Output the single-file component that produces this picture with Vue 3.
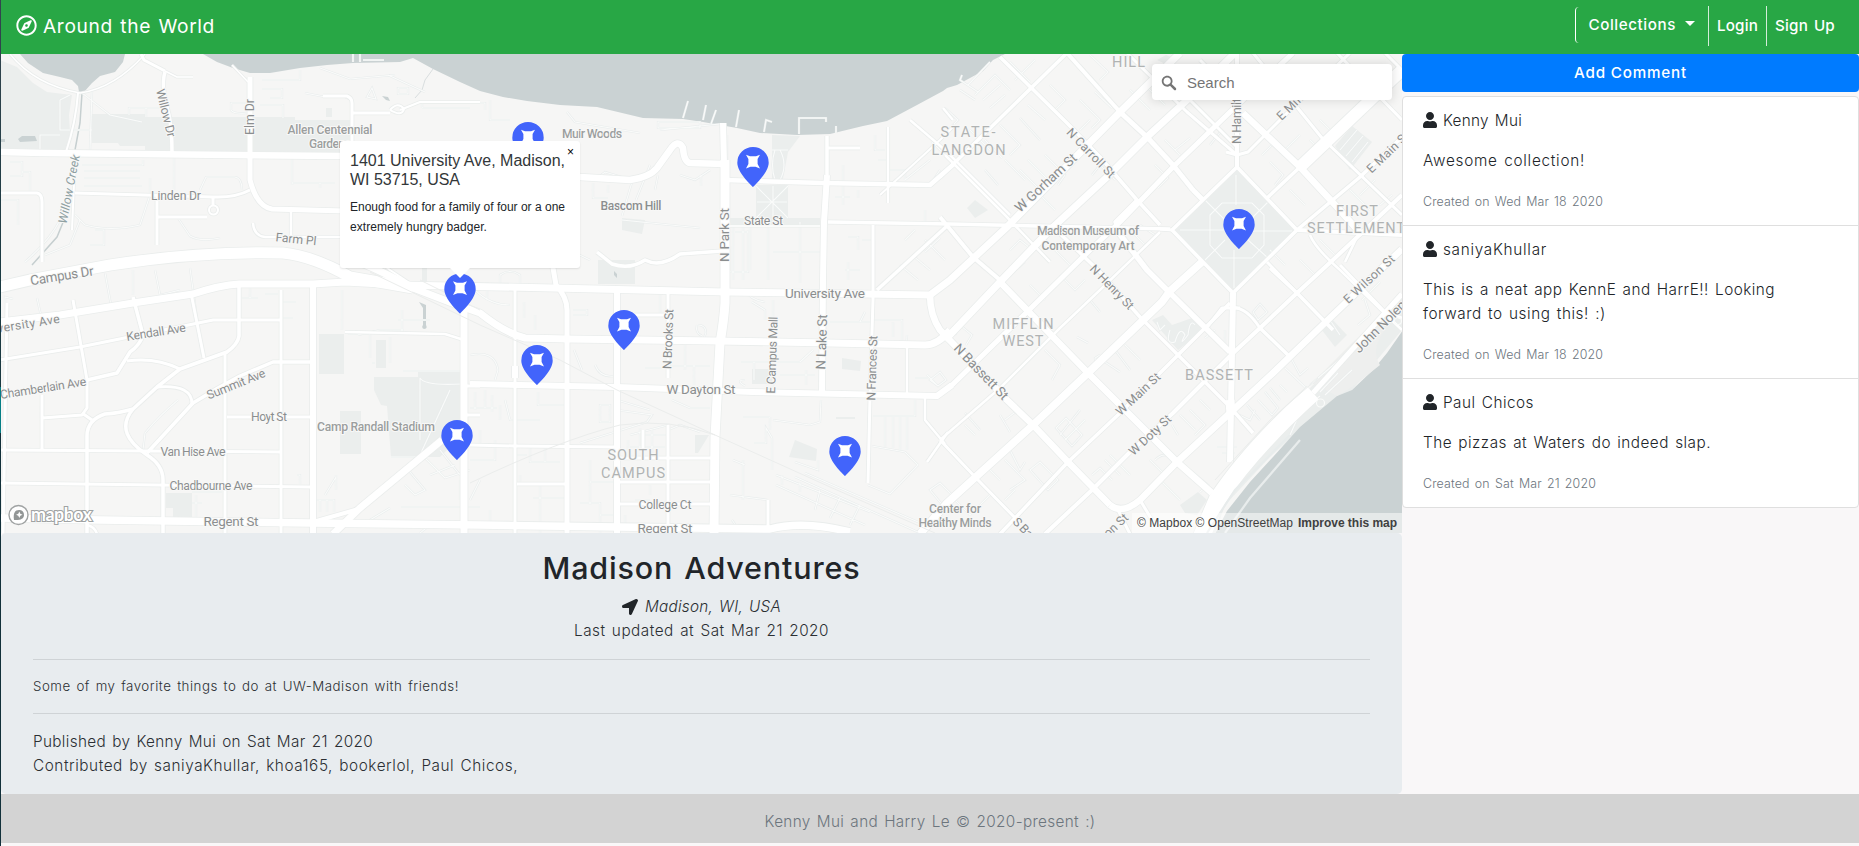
<script setup>
// Spreads an element's letters so that its text takes the given width.
const vFit = {
  mounted(el, { value }) {
    const w = el.getBoundingClientRect().width
    const n = el.textContent.length
    el.style.letterSpacing = ((value - w) / n).toFixed(3) + 'px'
  },
}

const comments = [
  { name: 'Kenny Mui', nw: 79, lines: [['Awesome collection!', 162]], date: 'Created on Wed Mar 18 2020', dw: 180 },
  {
    name: 'saniyaKhullar', nw: 104,
    lines: [['This is a neat app KennE and HarrE!! Looking', 352], ['forward to using this! :)', 183]],
    date: 'Created on Wed Mar 18 2020', dw: 180,
  },
  { name: 'Paul Chicos', nw: 91, lines: [['The pizzas at Waters do indeed slap.', 288]], date: 'Created on Sat Mar 21 2020', dw: 173 },
]

const water = [
  'M20,54 L28,63 43,73 60,77 72,80 78,86 79,92 84,92 92,83 100,76 115,72 123,62 125,54Z',
  'M203,54 L217,62 233,68 250,73 270,73 300,68 327,65 353,63 400,62 413,58 433,69 460,82 480,91 503,97 527,101 560,105 597,107 643,118 683,119 703,122 737,128 760,133 797,135 830,134 863,126 887,121 917,105 943,91 947,88 957,85 983,71 993,60 1005,54Z',
  'M1403,330 L1387,353 1373,370 1352,390 1337,396 1300,427 1273,457 1250,482 1227,511 1215,534 1403,534Z',
]

const parks = [
  'M0,60 L17,67 33,83 47,92 72,95 69,115 70,133 66,150 0,149Z',
  'M92,114 H145 V146 H120 L118,143 H92Z',
  'M145,117 H295 V152 H145Z', 'M295,120 H351 V153 H295Z',
  'M1237,170 L1295,230 1233,290 1175,230Z',
  'M319,334 H344 V374 H319Z', 'M376,340 H386 V368 H376Z',
  'M340,411 H361 V454 H340Z',
  'M374,377 L418,377 418,372 461,372 461,436 440,457 391,457 387,406 381,405 374,390Z',
  'M166,493 H192 V518 H173 V508 H166Z',
  'M598,260 H635 V284 H598Z', 'M622,218 L645,220 642,234 622,230Z',
  'M756,185 H788 V219 H756Z', 'M772,135 L800,136 788,152 782,184 772,180Z', 'M725,218 H820 V225 H725Z',
  'M752,369 H776 V384 H752Z', 'M842,358 L861,361 860,371 842,369Z',
  'M795,440 L817,449 816,461 789,457Z', 'M695,435 H709 L698,453 H695Z', 'M836,417 H855 V419 H836Z',
  'M1152,320 L1163,315 1172,325 1195,317 1202,331 1178,350Z',
  'M1318,325 L1330,317 1347,335 1335,347Z',
  'M1310,388 L1402,297 1402,330 1352,390 1337,396 1270,457 1225,505 1215,534 1205,534 1220,505Z',
  'M1180,505 L1198,492 1207,500 1197,515 1185,513Z',
  'M1335,146 L1352,126 1372,142 1350,170Z', 'M967,208 L975,200 988,210 975,218Z',
  'M326,108 H332 V117 H326Z', 'M1157,60 L1166,55 1178,60 1170,66Z', 'M422,268 h5 v14 h-5Z',
]

// Thin service lanes and footpaths.
const lanes = [
  'M129,115 V108 H160 M146,108 V117 M60,100 L70,95 M60,100 V130 H92 M92,92 L90,150 M82,93 L110,115 142,122 M40,152 V135 H60',
  'M82,165 H143 V160 M84,171 H140 M84,178 H140 M84,186 H142 M150,178 V195 M75,215 L85,225 Q110,232 140,225 L150,195 M174,158 V190',
  'M10,162 H22 V176 H10 M22,172 H30 V193 M1,200 H18 V225 M45,255 L70,245 80,220 M25,262 Q50,240 60,220 M95,230 H104 V245 H90',
  'M200,190 L206,177 H235 Q242,178 242,190 M178,218 L190,236 Q200,242 220,238 M292,158 V185 M292,183 H320 V188 M310,183 H335',
  'M231,110 V103 H248 M231,110 Q233,114 246,113 M305,93 L325,97 H345 L352,100 M388,75 L425,92 M262,80 H300 V70 M262,89 H282 V98 H270 M260,105 H283 V118 M367,97 L372,88 376,99Z M398,88 H408 V94 H398Z',
  'M353,54 V62 M360,54 V62 M363,60 H384 M395,75 L350,79 320,68 M422,103 H480 M422,108 H470 M422,103 V108',
  'M470,103 H485 L485,110 M490,100 V120 H510 M595,180 L605,172 625,178 M593,183 V198 H608 M608,185 V193 M655,190 L658,175 M567,112 L575,122 640,133',
  'M658,122 H700 V128 H658Z M660,130 L720,124 M727,135 V162 M565,248 L590,260 M632,182 L622,216 M622,220 L700,228 M636,200 L650,165 M680,175 L695,180 710,170 M701,175 V186',
  'M683,118 L688,101 M703,120 L706,105 M711,124 L716,110 M736,127 L739,110 M764,132 L766,120 772,122 M799,134 V118 H826 V122 M836,133 V126',
  'M772,150 L788,150 M775,150 Q770,165 775,180 M780,150 Q788,165 780,180 M756,186 L788,218 M788,186 L756,218 M757,202 H787 M773,186 V218',
  'M733,226 V280 M743,226 V280 M750,226 V270 M768,226 V280 M730,246 V272 H748 V230 M800,235 V283 M773,252 H820 M800,222 V252 M820,252 H800 M735,232 H748',
  'M843,165 V205 M835,197 H850 M858,190 V198 M848,237 H858 V250 M862,240 H874 V280 M845,270 H860 M890,170 H905 V180 M875,135 V150 H885 M878,160 H888 M925,210 V222 M915,230 L905,240 M848,262 V280',
  'M940,238 L925,252 M925,240 L945,260 M912,255 L930,270 M900,265 L918,280 M932,142 L945,155 M940,170 L930,185 M930,160 L905,180 M960,90 L975,100 M945,108 L958,120 948,130',
  'M5,303 V297 L13,299 M37,298 L42,320 M105,273 L111,305 M155,270 L160,295 180,290 M133,270 V295 M190,268 L202,355 M242,298 H258 M250,285 V298 M265,294 H278 M281,302 H296 M281,318 H293',
  'M342,290 V330 M348,334 H370 V358 M390,337 V363 M402,310 V333 M398,320 H430 M358,335 L380,330 H404 M372,363 H375 M403,371 H461 M420,378 Q425,386 461,384 M450,390 L420,455 M420,440 V378',
  'M391,457 H425 M336,475 V490 M297,475 H300 V484 M316,500 H334 V512 M320,500 V512 M327,500 V512 M440,450 L460,475 M425,458 L445,478 470,470 M410,472 L425,490 415,495 405,485 M395,480 L385,490 M430,475 L455,465 M336,477 L325,495',
  'M401,507 H480 M370,520 L390,508 M420,533 L430,525 M460,480 V500 M192,492 H222 M196,495 V518 M192,503 H202 M145,433 Q160,415 178,400 M143,450 L145,433',
  'M475,290 Q490,305 510,305 M487,282 V300 M500,284 V275 Q510,268 520,275 V286 M524,302 V318 M535,330 V315 M573,310 H587 V315 H573 M470,355 Q495,350 498,370 L495,380 M515,342 V370',
  'M470,408 H497 M500,405 V420 M475,392 V410 M485,390 V408 M492,395 V412 M505,400 L510,420 H540 M538,392 V405 H570 M480,430 V445 M470,460 H495 V440 M530,445 V462 H560 M545,448 V462 M515,455 H527',
  'M600,405 H610 V422 H600Z M617,410 L652,415 647,422 580,443 M617,400 L650,410 M630,435 L668,425 M628,440 V460 M640,428 V448 M645,435 H668 M630,447 H665 M652,430 V458 M668,430 L680,425 700,432',
  'M590,460 V505 M590,482 H615 M580,503 H600 V533 M533,498 H567 M540,485 V533 M490,510 V530 M480,480 L470,500 M600,515 H615 M650,485 V495 M520,475 V482 M625,515 V530 H640 M635,500 H650',
  'M574,350 L582,370 M595,365 Q600,378 615,376 M645,368 H668 M685,345 V370 M668,366 H710 M694,365 V385 M672,400 L690,408 H710 M660,292 V315 M640,316 H665 M698,325 Q706,325 706,333 Q704,336 704,345 M697,325 Q695,333 702,336',
  'M745,290 Q750,300 765,302 M752,302 L765,310 V320 M741,362 H800 M754,362 V380 M745,380 Q735,380 745,386 M800,362 L813,350 M743,417 H770 M770,417 V430 M754,443 H766 V428 L772,438 V470 M821,400 L820,422 810,425 773,420',
  'M830,322 H872 M873,320 H902 V345 M860,322 L865,312 M893,322 V337 M773,300 V392 M780,375 H815 M806,370 V385 M873,416 H915 V400 M885,417 V447 M893,417 V448 M900,417 V450 M907,417 V450 M872,446 L905,452 918,465 M868,485 L890,494 918,465',
  'M776,475 L870,512 M776,485 L865,525 M795,477 L920,533 M805,473 L925,525 M782,475 V485 M800,482 V492 M820,490 L815,510 M840,498 L830,518 M860,505 L850,525 M795,462 L818,470 V460 M743,460 V500 M732,520 Q740,530 732,533 M733,460 L745,465 M730,495 L768,500',
  'M907,335 Q905,380 908,395 M927,375 L937,385 M930,380 L940,372 946,380 938,386Z M915,378 H928 M930,490 L940,483 955,498 945,508Z M955,500 L970,515 M965,413 L980,430 M965,425 L975,435 M1005,420 L1018,410 M1000,415 L1010,432',
  'M955,335 L960,325 972,335 966,345 M965,322 L955,332 M1010,450 L1020,470 1025,462 M1005,460 L1025,480 1010,490 M1030,470 L1040,462 1058,480 1048,490Z M1005,500 L1015,490 M970,515 L990,495 M1000,480 L990,470',
  'M1060,435 L1080,410 M1065,440 L1085,420 M1056,428 L1072,446 1082,435 1066,418Z M1045,350 L1060,365 1052,380 M1077,337 L1088,343 M1100,355 L1095,358 Q1095,365 1105,362 L1120,372 M1115,350 L1130,370 M1125,345 L1140,360',
  'M1150,460 L1165,475 M1155,460 Q1165,450 1175,460 M1105,460 L1120,475 M1110,455 L1130,475 M1092,475 L1100,468 1112,480 M1160,480 L1180,500 M1190,470 L1208,485 1200,492 M1172,425 L1178,435 M1180,415 L1195,430 M1190,410 L1205,425 1195,435 M1200,400 L1210,410 M1217,447 H1237 M1222,453 H1235',
  'M1235,413 L1250,420 1255,410 M1247,405 L1260,420 M1258,400 L1272,415 1278,408 1265,392 M1270,388 L1280,400 M1280,385 L1287,392 M1292,360 L1300,375 1308,368 M1285,368 L1310,392 M1253,312 L1260,304 1267,312 1258,320Z M1205,338 L1215,330 M1225,330 V345',
  'M1290,435 L1302,408 1312,402 1320,396 M1310,385 L1345,355 M1315,390 L1347,358 M1320,392 L1338,373 M1325,395 L1352,370 M1365,300 L1370,315 1358,325 M1350,350 L1385,310 M1330,320 L1340,335 M1362,300 L1380,282',
  'M1157,322 L1160,330 1165,325 M1170,330 Q1165,345 1175,342 Q1180,325 1185,335 Q1178,348 1188,335 Q1190,318 1195,325',
  'M978,92 L960,80 962,75 M975,95 L995,75 1010,90 M983,100 L1000,85 M968,85 L990,62 M990,108 L1005,95 M1010,62 L1030,82 M1035,60 L1015,80 M1050,85 L1065,100 1055,110 M1028,105 L1045,120 M1080,65 L1098,85 M1090,55 L1108,72 1100,80',
  'M1000,125 L1020,145 1010,155 M1020,118 L1040,140 M1005,160 L1025,180 M985,140 L1002,158 M970,130 L990,150 M1028,160 L1050,182 M1020,170 L1040,190 1030,200 M1045,155 L1065,175 1058,185 M960,165 L975,180 M985,170 L998,185 M1035,190 L1055,210',
  'M1080,100 L1100,120 1092,128 M1095,92 L1112,108 M1080,130 L1090,120 M1092,175 L1100,165 1115,180 M1130,90 L1150,110 M1145,85 L1165,105 M1165,140 L1180,155 M1175,150 L1190,138 M1155,165 L1168,178 1158,188 M1195,120 L1210,135 M1210,145 L1222,130',
  'M1205,200 L1225,220 M1270,200 L1250,220 M1205,260 L1225,240 M1268,258 L1248,240 M1210,215 L1222,203 H1252 L1264,215 V245 L1252,258 H1222 L1210,245Z M1180,230 H1225 M1250,231 H1292 M1236,175 V205 M1234,250 V288',
  'M1262,155 L1275,142 1290,158 M1270,162 L1283,175 1275,185 M1285,150 L1300,135 M1310,140 L1322,152 1312,162 M1320,120 L1335,135 M1290,190 L1305,205 M1315,180 L1330,195 M1350,190 L1370,210 M1340,150 L1357,130 M1346,156 L1363,136 M1352,162 L1368,142 M1360,195 L1375,180 M1380,205 L1392,195',
  'M1075,245 L1090,260 M1055,250 L1070,265 M1010,250 L1020,240 1030,248 M1010,275 L1025,262 M1060,275 L1075,290 1085,280 M1090,300 L1100,312 M1030,285 L1045,300 M1135,235 L1145,245 M1155,235 L1140,225 M1270,250 L1285,265 M1300,260 L1315,275 M1320,240 L1335,255',
]

// [path, width]
const roads = [
  ['M10,54 Q35,85 80,93 Q115,88 145,54', 1.5], ['M141,54 L144,60 165,71', 3], ['M165,71 L177,77 193,77', 1.5], ['M232,65 L248,82', 1.5],
  ['M165,72 C161,85 165,100 169,115 Q172,130 172,153', 3.5], ['M250,77 V155', 5],
  ['M0,193 H37 Q42,194 42,202 V262', 3], ['M75,193 L213,197 Q235,198 250,190', 3],
  ['M157,195 V245', 3], ['M157,217 H207 M213,197 V205', 3], ['M209,210 a4.5,4.5 0 1,0 9,0 a4.5,4.5 0 1,0 -9,0', 2],
  ['M291,212 V236 M253,223 Q254,236 265,237 H340', 2.5], ['M323,96 H347 Q352,98 352,103 V152', 3], ['M352,113 H390', 3], ['M390,110 q8,-9 14,-1 q-2,8 -14,1 M400,110 L420,102 H480', 2],
  ['M78,93 C76,120 70,140 66,152 M75,160 L72,230', 2],
  ['M250,158 V180 Q257,207 272,209 L345,211', 5], ['M345,235 L390,270 420,290', 2],
  ['M7,303 L3,534', 3], ['M73,300 L87,380 V408 L82,415 42,418 M42,395 V450', 3], ['M82,413 L92,420', 3],
  ['M0,360 L80,347 213,320 H281', 3], ['M133,297 L143,335 Q140,345 130,352 L117,373 87,380', 3.5], ['M127,361 Q155,357 180,369', 3],
  ['M239,287 V336 Q238,344 227,352 L180,369 157,387 133,409 Q120,413 105,414 Q87,420 87,436 V534', 3.5],
  ['M133,409 C118,427 128,442 147,455 Q163,465 163,480 V534', 3.5], ['M157,387 Q193,384 192,405', 3], ['M147,453 L193,403 218,388 240,376 273,362 H310', 3.5],
  ['M191,293 L204,358', 3], ['M225,353 V534', 3], ['M281,290 V534', 3], ['M0,450 L281,452', 3], ['M0,483 L310,487', 3], ['M227,417 H310', 3],
  ['M313,284 V534', 6], ['M464,300 V534', 7], ['M345,332 L445,334 464,340', 2.5], ['M461,386 H480 M461,415 H480', 3],
  ['M442,440 L360,508 333,534', 7], ['M313,522 L362,508', 4], ['M87,525 Q95,527 97,534', 2.5],
  ['M515,290 V534', 3], ['M552,262 L556,285 Q567,297 567,310 V534', 5], ['M617,290 V534', 6], ['M668,290 V378 M668,425 V534', 3], ['M643,430 V450', 3],
  ['M625,315 H664', 3], ['M470,445 L515,446 617,447', 3], ['M617,458 H713 M517,484 H567 M617,482 H713 M617,504 H713', 3],
  ['M515,366 V378', 6],
  ['M597,252 L612,264 Q630,270 645,260 Q660,268 680,254 L723,251', 3.5],
  ['M723,123 L725,205 V270', 6], ['M725,160 V303 Q724,320 720,343 L715,437 714,534', 9],
  ['M827,136 V175', 3.5], ['M827,175 L824,222 823,280 822,393', 6], ['M828,148 H860', 3],
  ['M873,225 L873,300 870,397 868,483', 3], ['M888,127 V203', 2.5], ['M907,345 V395', 2.5],
  ['M768,500 V529', 3], ['M925,396 V420 L945,444 M948,432 L927,462', 2.5],
  ['M828,222 L950,224 1170,229', 3.5], ['M725,180 L823,183 930,185 955,163', 4.5], ['M947,226 L877,290', 3.5],
  ['M725,226 H820', 1.5],
  ['M940,217 L973,257 1000,280', 4], ['M943,108 L953,120 M910,120 L945,150 1010,215', 2.5],
  ['M940,177 L1067,53', 3.5], ['M880,195 L940,140 955,125', 2], ['M945,155 L1005,215 1050,262', 2.5],
  ['M1000,57 L1067,123 1100,157 1137,200 1160,225', 3.5], ['M1067,53 L1120,112 1147,137', 4],
  ['M1127,53 L1187,112 1237,155', 3], ['M1200,60 L1240,100', 3],
  ['M1120,112 L1147,137 1173,165 1193,190 M1193,190 L1203,200', 5],
  ['M1053,227 L1100,272 1140,317 1178,355 1230,407 1253,433', 3.5],
  ['M1115,228 L1147,270 1170,293 1230,352', 5.5], ['M1137,200 L1115,222 1120,232', 3.5],
  ['M950,387 L1027,312 1090,250 1120,222 1173,167 1230,112 1293,53', 5],
  ['M1000,388 L1060,328 1100,290 1160,232', 2.5], ['M940,440 L1000,388', 2.5],
  ['M940,440 L978,480 1020,523', 3], ['M1000,534 L1068,462 1120,413 1178,355 1230,303', 3.5],
  ['M1045,534 L1092,490 1130,452 1173,413 1230,356 1260,328 1297,293 1335,258 1402,195', 4],
  ['M1270,268 L1297,293 1333,330 M1260,328 L1290,357', 3.5], ['M1230,308 Q1245,305 1260,328', 3], ['M1205,330 L1222,308 H1240', 3],
  ['M1172,230 L1237,167 1297,230 1233,293Z', 3.5], ['M1172,230 L1160,229', 3],
  ['M1237,53 V167', 4], ['M1226,152 L1237,155 1248,152 1283,117 1350,53', 3],
  ['M1233,293 L1232,352 1230,462', 6], ['M1230,400 L1231,415', 9],
  ['M1267,198 L1300,167', 3.5], ['M1267,262 L1297,293', 3],
  ['M1297,230 L1360,177 1402,137', 3.5], ['M1297,230 L1402,235', 4], ['M1310,235 Q1315,248 1340,270 L1402,330 M1357,237 L1345,262', 2.5],
  ['M1190,100 L1237,147', 3], ['M1253,53 L1322,138 1402,215', 3], ['M1337,53 L1402,120', 3], ['M1385,53 L1402,70', 3],
  ['M1243,113 L1300,167 1337,207 1362,235', 6.5],
  ['M1340,265 L1385,312 1402,318', 3],
  ['M1140,500 L1155,525', 3], ['M1118,510 L1130,534', 3],
  ['M1313,393 L1402,294', 5],
  ['M0,152 L43,153 340,156 H480 L580,177 630,180 Q650,177 657,168 L670,150 Q678,138 683,148 Q684,162 690,163 L725,164', 6.5],
  ['M0,287 L30,280 110,265 Q200,251 283,253 Q313,256 350,277 L413,288', 11],
  ['M345,258 Q365,262 413,288 L460,306 480,313 Q505,333 525,338 L567,339 717,341 830,343 925,345 Q938,345 950,330', 7],
  ['M0,322 L60,315 133,303 193,294 Q220,285 239,284 H313 L345,282 400,285 553,288 725,292 930,295 950,280 1007,227 1120,112 1180,53', 7],
  ['M930,295 Q930,315 940,330 L1007,400 1033,425 1068,462 1110,505', 6.5],
  ['M945,340 L1000,282 1050,230 1107,177 1147,137 1187,100 1235,53', 7],
  ['M470,384 L617,387 753,392 937,396 952,385', 6],
  ['M1000,282 L1027,310 1088,373 1177,462 1212,493', 6.5],
  ['M920,534 L947,503 1033,425 1088,373 1162,302 1170,291 1202,262', 7.5],
  ['M1110,505 Q1122,515 1140,500 L1177,462 1230,413 1273,373 1333,315 1402,249', 6.5],
  ['M1300,167 L1402,70', 12],
  ['M0,518 L100,520 310,523 480,525 770,529 Q803,520 850,532', 7.5],
  ['M1313,393 Q1250,450 1217,500 L1200,540', 17],
]

const hood = { s: 14.5, c: '#b0b3b3', ls: 1 }
const labels = [
  { t: 'Willow Dr', x: 166, y: 113, r: 76, w: 49 }, { t: 'Elm Dr', x: 250, y: 117, r: -90, w: 36 },
  { t: 'Willow Creek', x: 69, y: 189, r: -79, w: 70, c: '#8fa0a2', i: 1 },
  { t: 'Allen Centennial', x: 330, y: 129.500, w: 85, m: 1 }, { t: 'Gardens', x: 330, y: 144, w: 42, m: 1 },
  { t: 'Linden Dr', x: 176, y: 195.5, w: 50 }, { t: 'Farm Pl', x: 296, y: 239, r: 6, w: 41 },
  { t: 'Campus Dr', x: 62, y: 276, r: -9, w: 64, s: 13.5 }, { t: 'University Ave', x: 19, y: 325, r: -9, w: 82 },
  { t: 'Kendall Ave', x: 156, y: 332, r: -9, w: 60 }, { t: 'Chamberlain Ave', x: 43, y: 388, r: -9, w: 87 },
  { t: 'Summit Ave', x: 236, y: 384, r: -22, w: 62 }, { t: 'Hoyt St', x: 269, y: 417, w: 36 },
  { t: 'Van Hise Ave', x: 193, y: 451.5, w: 65 }, { t: 'Chadbourne Ave', x: 211, y: 486, w: 83 },
  { t: 'Regent St', x: 231, y: 522, w: 55, s: 13.5 }, { t: 'Camp Randall Stadium', x: 376, y: 427, w: 118, m: 1 },
  { t: 'Muir Woods', x: 592, y: 133.5, w: 60, m: 1 }, { t: 'Bascom Hill', x: 631, y: 206, w: 61, m: 1, c: '#8b8e8f' },
  { t: 'State St', x: 763.5, y: 220.5, w: 39 }, { t: 'N Park St', x: 725, y: 235, r: -90, w: 54, s: 13.5 },
  { t: 'University Ave', x: 825, y: 294, w: 80, s: 13.5 }, { t: 'N Brooks St', x: 668, y: 339, r: -88, w: 60 },
  { t: 'W Dayton St', x: 701, y: 390, w: 69, s: 13.5 }, { t: 'E Campus Mall', x: 772, y: 355, r: -88, w: 77 },
  { t: 'N Lake St', x: 822, y: 342, r: -88, w: 55, s: 13.5 }, { t: 'N Frances St', x: 872, y: 368, r: -88, w: 65 },
  { t: 'SOUTH', x: 633, y: 456, w: 51, ...hood }, { t: 'CAMPUS', x: 633, y: 474, w: 64, ...hood },
  { t: 'College Ct', x: 665, y: 504.5, w: 53 }, { t: 'Regent St', x: 665, y: 529, w: 55, s: 13.5 },
  { t: 'HILL', x: 1128.500, y: 63, w: 33, ...hood }, { t: 'STATE-', x: 968, y: 133, w: 55, ...hood }, { t: 'LANGDON', x: 968.5, y: 150.5, w: 74, ...hood },
  { t: 'N Carroll St', x: 1091, y: 153, r: 46, w: 64 }, { t: 'W Gorham St', x: 1046, y: 183, r: -43, w: 79, s: 13.5 },
  { t: 'Madison Museum of', x: 1088, y: 231, w: 102, m: 1 }, { t: 'Contemporary Art', x: 1088, y: 245.5, w: 93, m: 1 },
  { t: 'N Henry St', x: 1112, y: 287, r: 46, w: 57 }, { t: 'N Hamilton St', x: 1237, y: 108, r: -90, w: 72 },
  { t: 'E Mifflin St', x: 1300, y: 97, r: -44, w: 60 }, { t: 'E Main St', x: 1388, y: 152, r: -44, w: 54 },
  { t: 'FIRST', x: 1357, y: 211.500, w: 42, ...hood }, { t: 'SETTLEMENT', x: 1356, y: 229, w: 98, ...hood },
  { t: 'E Wilson St', x: 1369, y: 279, r: -43, w: 65 }, { t: 'John Nolen Dr', x: 1386, y: 321, r: -45, w: 84, s: 13.5 },
  { t: 'MIFFLIN', x: 1023, y: 324.500, w: 61, ...hood }, { t: 'WEST', x: 1023, y: 342, w: 41, ...hood },
  { t: 'BASSETT', x: 1219, y: 375.5, w: 68, ...hood }, { t: 'N Bassett St', x: 981, y: 372, r: 46, w: 72, s: 13.5 },
  { t: 'W Main St', x: 1138, y: 394, r: -43, w: 56 }, { t: 'W Doty St', x: 1150, y: 435, r: -43, w: 53 },
  { t: 'Center for', x: 955, y: 508.500, w: 52, m: 1 }, { t: 'Healthy Minds', x: 955, y: 523, w: 73, m: 1 },
  { t: 'S Bassett St', x: 1036, y: 541, r: 46, w: 60 }, { t: 'W Wilson St', x: 1102, y: 538, r: -43, w: 66 },
]

const pins = [[528, 162], [753, 187], [1239, 249], [460, 313.5], [624, 350], [537, 385], [457, 460], [845, 476]]
</script>

<template>
  <div class="page">
    <nav class="nav">
      <a class="brand">
        <svg viewBox="0 0 496 512" class="compass"><path fill="#fff" d="M347.94 129.86L203.6 195.83a31.94 31.94 0 0 0-15.77 15.77l-65.97 144.34c-7.61 16.65 9.54 33.81 26.2 26.2l144.34-65.97a31.94 31.94 0 0 0 15.77-15.77l65.97-144.34c7.61-16.66-9.54-33.81-26.2-26.2zm-77.36 148.72c-12.47 12.47-32.69 12.47-45.16 0-12.47-12.47-12.47-32.69 0-45.16 12.47-12.47 32.69-12.47 45.16 0 12.47 12.47 12.47 32.69 0 45.16zM248 8C111.03 8 0 119.03 0 256s111.03 248 248 248 248-111.03 248-248S384.97 8 248 8zm0 448c-110.28 0-200-89.72-200-200S137.72 56 248 56s200 89.72 200 200-89.72 200-200 200z" /></svg>
        <span v-fit="172">Around the World</span>
      </a>
      <div class="links">
        <a class="drop"><span v-fit="87.5">Collections</span><i class="caret"></i></a>
        <a class="link login"><span v-fit="41">Login</span></a>
        <a class="link signup"><span v-fit="60">Sign Up</span></a>
      </div>
    </nav>

    <div class="body">
      <main class="main">
        <section class="map">
          <svg class="canvas" viewBox="1 54 1401 479" width="1401" height="479">
            <rect x="0" y="53" width="1404" height="482" fill="#f6f6f5" />
            <path v-for="(d, i) in parks" :key="'p' + i" :d="d" fill="#ebeeed" />
            <path v-for="(d, i) in water" :key="'w' + i" :d="d" fill="#cad2d3" />
            <path d="M18,139 L22,136 35,136 37,141 20,142Z M1,139 h4 v3 h-4Z M419,302 l7,3 v20 q2,4 -2,4 q-3,-1 -1,-4 v-17Z M382,96 l6,1 2,4 -4,-1Z M614,271 l3,3 v4 l-3,-3Z" fill="#cad2d3" />
            <path d="M1312,383 L1350,345 1375,322 1385,330 Q1370,350 1380,365 L1355,385 1337,396Z" fill="#eeefee" />
            <path d="M82,93 L80,123 75,150 M64,220 L57,237 32,265" class="creek" />
            <path d="M433,69 L425,80 422,90 415,98" stroke="#d9dedf" fill="none" />
            <path v-for="(d, i) in lanes" :key="'lc' + i" :d="d" class="lane-edge" />
            <path v-for="(d, i) in lanes" :key="'l' + i" :d="d" class="lane" />
            <path v-for="([d, w], i) in roads" :key="'rc' + i" :d="d" class="road" stroke="#eaedec" :stroke-width="w + 1.6" />
            <path v-for="([d, w], i) in roads" :key="'r' + i" :d="d" class="road" stroke="#fff" :stroke-width="w" />
            <path d="M370,272 L480,325 560,360 617,390 715,435 830,487 935,533 M420,280 L480,310 M1215,480 L1270,420 1318,378 M470,483 Q560,440 620,425 Q670,418 715,435" class="rail" />
            <path d="M1225,533 L1250,498 1300,440 M1207,533 L1235,490 1290,435" class="lane-edge" />
            <circle cx="1320.500" cy="403" r="4" class="lane" /><circle cx="1398" cy="321" r="3.500" class="lane" />
            <g v-for="(l, i) in labels" :key="'t' + i" :transform="`translate(${l.x} ${l.y}) rotate(${l.r || 0})`">
              <text y="4.300" text-anchor="middle" :font-size="l.s || 12.3" :fill="l.c || (l.m ? '#9b9e9e' : '#8b8e8f')" :font-weight="l.m ? 500 : 400" :font-style="l.i ? 'italic' : 'normal'" :textLength="l.w" class="label">{{ l.t }}</text>
            </g>
            <g v-for="([x, y], i) in pins" :key="'m' + i" :transform="`translate(${x} ${y})`">
              <path d="M0,0 C-3,-3 -15.700,-15 -15.700,-24.300 A15.700,15.700 0 0 1 15.700,-24.300 C15.700,-15 3,-3 0,0Z" fill="#4264fb" />
              <path d="M-7,-32.200 L-3,-30.800 H3 L7,-32.200 L4.600,-28 V-23 L7,-18.600 L2.500,-20.300 H-2.500 L-7,-18.600 L-4.600,-23 V-28Z" fill="#fff" />
            </g>
            <g>
              <circle cx="18.500" cy="515" r="9.500" fill="#fff" fill-opacity=".9" stroke="#a0a3a3" stroke-width="1.400" />
              <path d="M14,520 C13,513 15,510 19,510 A4.700,4.700 0 0 1 24,515 C24,519 20,520.500 14,520Z" fill="#929696" />
              <path d="M19.300,511.500 l1,2.200 2.200,1 -2.200,1 -1,2.200 -1,-2.200 -2.200,-1 2.200,-1Z" fill="#fff" />
              <text x="31" y="520.500" class="logo" textLength="61">mapbox</text>
            </g>
          </svg>

          <div class="popup">
            <span class="close">×</span>
            <h3><span v-fit="215">1401 University Ave, Madison,</span><br /><span v-fit="110">WI 53715, USA</span></h3>
            <p><span v-fit="215">Enough food for a family of four or a one</span><br /><span v-fit="137">extremely hungry badger.</span></p>
          </div>

          <div class="search">
            <svg viewBox="0 0 18 18" width="20" height="20"><path fill="#757575" d="M7.400 2.500c-2.700 0-4.900 2.200-4.900 4.900s2.200 4.900 4.900 4.900c1 0 1.800-.2 2.500-.8l3.700 3.700c.2.200.4.300.8.300.7 0 1.100-.4 1.100-1.100 0-.3-.1-.5-.3-.8L11.400 10c.4-.8.8-1.600.8-2.500.1-2.800-2.100-5-4.800-5zm0 1.600c1.800 0 3.200 1.400 3.200 3.200s-1.400 3.200-3.200 3.200-3.300-1.300-3.300-3.100 1.400-3.300 3.300-3.300z" /></svg>
            <span>Search</span>
          </div>
          <div class="attrib"><span v-fit="156">© Mapbox © OpenStreetMap</span><b v-fit="99">Improve this map</b></div>
        </section>

        <section class="info">
          <h1><span v-fit="318">Madison Adventures</span></h1>
          <div class="place">
            <svg viewBox="0 0 512 512" width="16" height="16"><path fill="#212529" d="M444.520 3.520L28.740 195.420c-47.970 22.390-31.980 92.750 19.190 92.750h175.910v175.910c0 51.170 70.360 67.170 92.750 19.190l191.900-415.780c15.990-38.390-25.590-79.970-63.970-63.970z" /></svg>
            <em v-fit="136">Madison, WI, USA</em>
          </div>
          <div class="updated"><span v-fit="255">Last updated at Sat Mar 21 2020</span></div>
          <hr />
          <p class="desc"><span v-fit="426">Some of my favorite things to do at UW-Madison with friends!</span></p>
          <hr />
          <div><span v-fit="340">Published by Kenny Mui on Sat Mar 21 2020</span></div>
          <div><span v-fit="485">Contributed by saniyaKhullar, khoa165, bookerlol, Paul Chicos,</span></div>
        </section>
      </main>

      <aside class="side">
        <button class="add"><span v-fit="113">Add Comment</span></button>
        <ul class="list">
          <li v-for="(c, i) in comments" :key="i">
            <div class="who">
              <svg viewBox="0 0 448 512" width="14" height="16"><path fill="#212529" d="M224 256c70.700 0 128-57.300 128-128S294.700 0 224 0 96 57.300 96 128s57.300 128 128 128zm89.600 32h-16.700c-22.200 10.200-46.900 16-72.900 16s-50.600-5.800-72.900-16h-16.700C60.200 288 0 348.200 0 422.400V464c0 26.500 21.500 48 48 48h352c26.500 0 48-21.500 48-48v-41.600c0-74.200-60.200-134.400-134.400-134.400z" /></svg>
              <span v-fit="c.nw">{{ c.name }}</span>
            </div>
            <p><template v-for="(l, j) in c.lines" :key="j"><br v-if="j" /><span v-fit="l[1]">{{ l[0] }}</span></template></p>
            <small><span v-fit="c.dw">{{ c.date }}</span></small>
          </li>
        </ul>
      </aside>
    </div>

    <footer class="footer"><span v-fit="331">Kenny Mui and Harry Le © 2020-present :)</span></footer>
  </div>
</template>

<style>
body { background: #f9f7f8; }
</style>

<style scoped>
* { box-sizing: border-box; }
.page {
  height: 846px; overflow: hidden; padding-left: 1px; color: #212529;
  font: 350 15.300px/24px Inter, "Liberation Sans", sans-serif; word-spacing: 1.500px;
  background: linear-gradient(#33454f 0, #1b3a42 280px, #1b3a42 387px, #067f86 387px, #067f86 433px, #12303a 433px) 0 0 / 1px 100% no-repeat;
}
span, em, b { white-space: nowrap; display: inline-block; }
.nav { height: 54px; background: #28a745; color: #fff; display: flex; justify-content: space-between; padding-left: 15px; }
.brand { display: flex; align-items: center; gap: 6px; font-size: 19.200px; padding-bottom: 3px; font-weight: 400; }
.compass { width: 21px; height: 21px; }
.links { display: flex; align-items: flex-start; font-weight: 500; font-size: 15.200px; }
.drop { display: flex; margin-top: 7px; width: 133px; height: 36px; padding: 6px 0 0 12.500px; border-left: 1px solid #fff; border-radius: 4px 0 0 4px; }
.caret { margin: 8px 0 0 9px; width: 0; height: 0; border: 5px solid transparent; border-top-color: #fff; border-bottom: 0; }
.link { margin-top: 6px; height: 40px; padding: 8px 0 0 8px; border-left: 1px solid #d4edda; }
.login { width: 58px; }
.signup { width: 93px; }
.body { display: flex; height: 740px; }
.main { width: 1401px; }
.map { position: relative; height: 479px; overflow: hidden; background: #f6f6f5; }
.canvas { display: block; }
.creek { fill: none; stroke: #c6cfd0; stroke-width: 1.500; }
.lane-edge { fill: none; stroke: #e8ecec; stroke-width: 2.200; }
.lane { fill: none; stroke: #fafbfa; stroke-width: 1.100; }
.road { fill: none; stroke-linejoin: round; }
.rail { fill: none; stroke: #ebedec; stroke-width: 1; }
.label { font-family: Roboto, sans-serif; word-spacing: 0; paint-order: stroke; stroke: #f8f8f7; stroke-width: 2px; stroke-linejoin: round; }
.logo { font: 700 18px Lato, sans-serif; fill: #fff; stroke: #a0a3a3; stroke-width: 2.200px; paint-order: stroke; }
.popup {
  position: absolute; left: 339px; top: 87px; width: 240px; height: 127px; padding: 8px 10px; background: #fff; border-radius: 3px;
  box-shadow: 0 1px 2px rgba(0, 0, 0, .1); font-family: "Liberation Sans", Arial, sans-serif; font-weight: 400; word-spacing: 0; color: #333739;
}
.popup::after { content: ""; position: absolute; left: 110px; top: 127px; border: 10px solid transparent; border-top-color: #fff; border-bottom: 0; }
.popup h3 { margin: 2px 0 8px; font-weight: 400; font-size: 16px; line-height: 19px; }
.popup p { margin: 0; font-size: 12px; line-height: 20px; color: #212529; }
.close { position: absolute; right: 6px; top: 1px; font-size: 12px; line-height: 20px; color: #000; }
.search {
  position: absolute; right: 10px; top: 10px; width: 240px; height: 36px; padding-left: 7px; display: flex; align-items: center; gap: 8px;
  background: #fff; border-radius: 4px; box-shadow: 0 0 10px 2px rgba(0, 0, 0, .1); color: #757575; font: 15px "Liberation Sans", Arial, sans-serif; padding-top: 1px;
}
.attrib {
  position: absolute; right: 0; bottom: 0; height: 20px; width: 270px; padding-left: 5px; display: flex; gap: 5px;
  background: rgba(255, 255, 255, .5); font: 12px/20px "Liberation Sans", Arial, sans-serif; color: #404040; word-spacing: 0;
}
.info { height: 261px; padding: 16px 32px 0; background: #e8ecef; border-radius: 5px; color: #2b2f33; }
.info h1 { margin: 0 0 8px; text-align: center; font-size: 30.500px; line-height: 38px; font-weight: 450; color: #212529; word-spacing: 2px; }
.place { display: flex; justify-content: center; align-items: center; gap: 7px; height: 24px; }
.updated { text-align: center; }
.info hr { margin: 16px 0; border: 0; border-top: 1px solid #cfd3d6; }
.desc { margin: 0; font-size: 13.300px; line-height: 21px; }
.side { width: 457px; }
.add { display: block; width: 457px; height: 38px; border: 0; border-radius: 4px; background: #007bff; color: #fff; font: 500 15.200px/24px Inter, "Liberation Sans", sans-serif; padding: 0; }
.list { list-style: none; margin: 4px 0 0; padding: 0; height: 412px; background: #fff; border: 1px solid #dfdfdf; border-radius: 4px; }
.list li { padding: 12px 20px; border-bottom: 1px solid #dfdfdf; }
.list li:last-child { border-bottom: 0; }
.who { display: flex; align-items: center; gap: 6px; height: 24px; }
.who svg { margin-bottom: 2px; }
.list p { margin: 16px 0; }
.list small { display: block; height: 24px; font-size: 12.400px; line-height: 25px; color: #6c757d; }
.footer { height: 49px; background: #d3d3d3; color: #6c757d; text-align: center; padding-top: 16px; line-height: 24px; }
</style>
